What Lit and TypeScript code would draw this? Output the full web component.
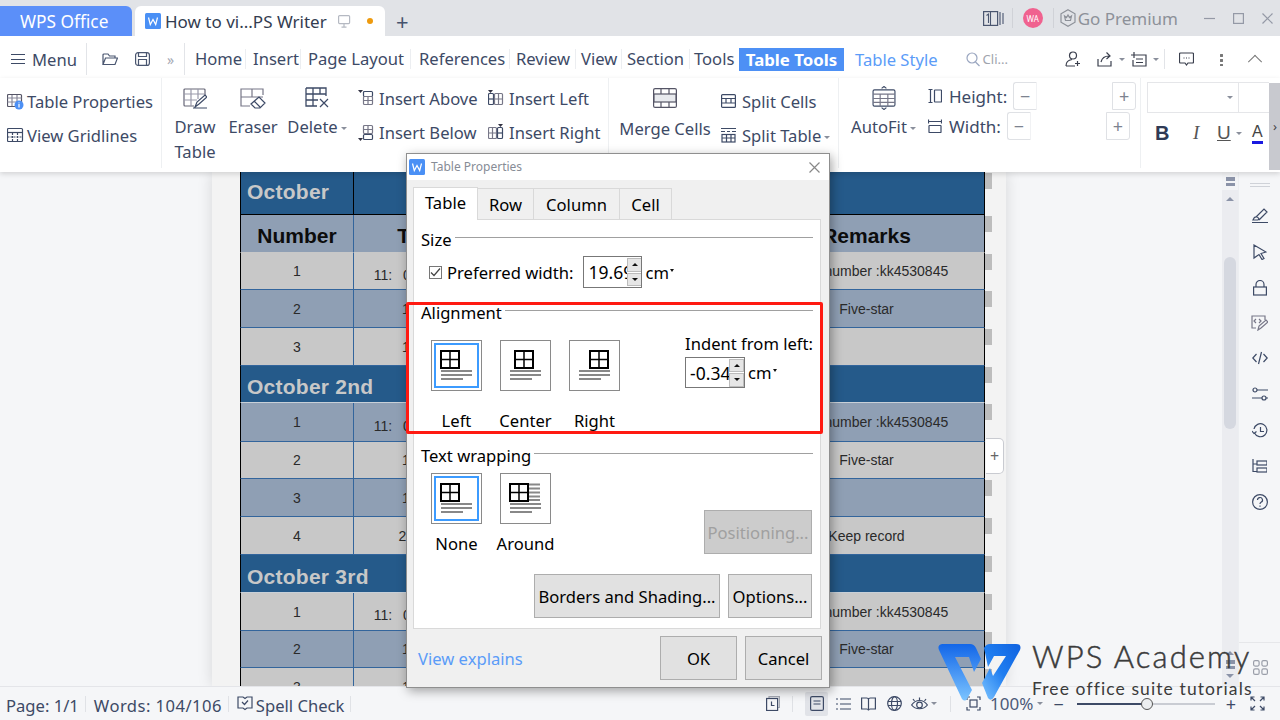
import { LitElement, html, css, svg } from "lit";
import { customElement } from "lit/decorators.js";

const ic = (w: number, h: number, body: unknown) => html`<svg class="ic" width=${w} height=${h} viewBox="0 0 ${w} ${h}" fill="none" stroke="currentColor" stroke-width="1.2">${body}</svg>`;

const icons = {
  tableProps: ic(17, 17, svg`<rect x=".5" y="1.5" width="14" height="12" rx="1" stroke="#556"/><path d="M.5 5h14M.5 9h14M5 2v11M10 2v11" stroke="#889"/><circle cx="12" cy="12" r="4.5" fill="#4d90f5" stroke="none"/><path d="M12 11v3.5M12 9.5v.8" stroke="#fff"/>`),
  gridlines: ic(17, 17, svg`<rect x=".5" y="1.5" width="15" height="13" rx="1"/><path d="M.5 5.5h15" /><path d="M.5 10h15M5.5 6v8M10.5 6v8" stroke-dasharray="2 1"/>`),
  draw: ic(24, 22, svg`<path d="M22 9V3a1 1 0 0 0-1-1H2a1 1 0 0 0-1 1v15a1 1 0 0 0 1 1h9" stroke="#667"/><path d="M1 7h21M1 13h13M8 2v17M15 2v10" stroke="#99a"/><path d="M12 20l2-5 8-7 2 2-8 7zM10 21h14"/>`),
  eraser: ic(26, 22, svg`<path d="M23 8V2H1v17h9M1 10h22M12 2v8" stroke="#778"/><path d="M11 17l8-7 6 6-5 5h-5zM14 14l6 6"/>`),
  del: ic(24, 22, svg`<path d="M1 1h20v8M1 1v18h11M1 7h20M1 13h12M8 1v18M15 1v6" stroke-width="1.3"/><path d="M15 12l8 8M23 12l-8 8"/>`),
  insAbove: ic(16, 16, svg`<path d="M0 0h5L2.5 3z" fill="#334" stroke="none"/><rect x="5.5" y="1.5" width="9" height="5" rx="1"/><rect x="5.5" y="6.5" width="9" height="8" rx="1" stroke="#778"/><path d="M10 7v8M6 10.500h8" stroke="#778"/>`),
  insBelow: ic(16, 17, svg`<rect x="5.500" y="1.500" width="9" height="8" rx="1" stroke="#778"/><path d="M10 2v7M6 5.500h8" stroke="#778"/><rect x="5.500" y="10.500" width="9" height="5" rx="1"/><path d="M0 14h5l-2.500 3z" fill="#334" stroke="none"/>`),
  insLeft: ic(16, 16, svg`<path d="M0 0h5L2.500 3z" fill="#334" stroke="none"/><rect x=".5" y="3.500" width="5" height="11" rx="1"/><path d="M1 9h4" /><rect x="6.500" y="3.500" width="8" height="11" rx="1" stroke="#778"/><path d="M10.500 4v10M7 9h7" stroke="#778"/>`),
  insRight: ic(16, 16, svg`<path d="M10 0h5l-2.500 3z" fill="#334" stroke="none"/><rect x=".5" y="3.500" width="8" height="11" rx="1" stroke="#778"/><path d="M4.500 4v10M1 9h7" stroke="#778"/><rect x="9.500" y="3.500" width="5" height="11" rx="1"/><path d="M10 9h4"/>`),
  merge: ic(24, 20, svg`<rect x=".6" y=".6" width="22.800" height="18.800" rx="1.500" stroke="#556"/><rect x="1" y="6" width="22" height="8" fill="#e8eaee" stroke="#556"/><path d="M8 1v5M16 1v5M8 14v5M16 14v5" stroke="#556"/>`),
  splitCells: ic(15, 14, svg`<rect x=".6" y=".6" width="13.800" height="12.800" rx="1"/><path d="M1 4.500h13M1 9h13M5 4.500V9M10 4.500V9"/>`),
  splitTable: ic(15, 16, svg`<path d="M0 1.500h15M0 4.500h4M6 4.500h3M11 4.500h4"/><rect x="1" y="7.500" width="13" height="7.500"/><path d="M1 11h13M5.500 8v7M10 8v7"/>`),
  autofit: ic(24, 25, svg`<path d="M9.500 2.500L12 .5l2.500 2M9.500 22.500l2.500 2 2.500-2"/><rect x=".6" y="4" width="22.800" height="17" rx="1.500"/><path d="M.6 8.500h22.800M.6 13h22.800M.6 17h22.800M8 8.500V21M16 8.500V21" stroke="#778"/>`),
  hIcon: ic(14, 14, svg`<path d="M.5.500h4M.5 13.500h4M2.500.5v13"/><rect x="6.500" y="1" width="7" height="12" rx=".5"/>`),
  wIcon: ic(14, 14, svg`<path d="M.5.500v4M13.500.500v4M.5 2.500h13"/><rect x="1" y="6.500" width="12" height="7" rx=".5"/>`),
  open: ic(16, 13, svg`<path d="M1 11.500V2a1 1 0 0 1 1-1h4l1.500 2H13v2M1 11.500l2.500-6.500h12l-2.500 6.500z"/>`),
  save: ic(15, 14, svg`<rect x=".6" y=".6" width="13.800" height="12.800" rx="2.500"/><path d="M3.500 1v3.500h8V1M3.500 13V7.500h8V13"/>`),
  search: ic(14, 15, svg`<circle cx="6" cy="6" r="5"/><path d="M9.500 10l4 4"/>`),
  person: ic(16, 16, svg`<circle cx="8" cy="4.500" r="3.500"/><path d="M1 15c0-3.500 2-6 6-6.500M1 15h9M12.500 10v5M10 12.500h5"/>`),
  share: ic(16, 15, svg`<path d="M1 7v7h13V9M4 10c1-4 4-6 8-6M9.500.5L13 4l-3.500 3"/>`),
  note: ic(16, 15, svg`<path d="M5 3h10v11H2V8M5 7h7M5 10.500h7M3 0v6M0 3h6"/>`),
  comment: ic(15, 14, svg`<path d="M1.500 1h12a1 1 0 0 1 1 1v8a1 1 0 0 1-1 1H9l-1.500 2L6 11H1.500a1 1 0 0 1-1-1V2a1 1 0 0 1 1-1z"/><path d="M4.500 6h1M7 6h1M9.500 6h1"/>`),
  pen: ic(16, 15, svg`<path d="M4 9L12 1l3 3-8 8M2 10c2-2 4-1 5 1l-1 1H1zM0 14.500h16"/>`),
  cursor: ic(14, 16, svg`<path d="M1 1l12 7-5 1.500 3 5-2 1-3-5L1 14z"/>`),
  lock: ic(14, 16, svg`<rect x=".6" y="7" width="12.800" height="8" /><path d="M3 7V4.500a4 4 0 0 1 8 0V7"/>`),
  codeEdit: ic(17, 16, svg`<path d="M14 5V1H1v12h4" stroke="#778"/><path d="M5 4L3 6l2 2M8 4l2 2-2 2" stroke="#778"/><path d="M7 15l1-4 7-6 2 2-7 6z" stroke="#778"/>`),
  code: ic(16, 14, svg`<path d="M4.500 3L.8 7l3.700 4M11.500 3l3.700 4-3.700 4M9.500 1l-3 12"/>`),
  sliders: ic(16, 14, svg`<circle cx="3" cy="3" r="2"/><path d="M5 3h11M0 11h10"/><circle cx="12" cy="11" r="2"/><path d="M14 11h2"/>`),
  history: ic(16, 15, svg`<path d="M2.500 10A6.500 6.500 0 1 0 2 6M0 8l2 2.500L4.500 8.500M8.500 4v4.500H12"/>`),
  outline: ic(15, 14, svg`<path d="M1 0v12.500h4M1 5h4"/><rect x="5" y="2" width="10" height="4"/><rect x="5" y="9" width="10" height="4"/>`),
  help: ic(16, 16, svg`<circle cx="8" cy="8" r="7.400"/><path d="M5.500 6a2.500 2.500 0 1 1 3.500 2.300c-.7.4-1 .9-1 1.700M8 11.500v1.200"/>`),
  spell: ic(16, 15, svg`<path d="M1 1h5l2 1.500L10 1h5v11h-5l-2 1.500L6 12H1z"/><path d="M5 6l2.500 2.500L11 4.500"/>`),
  reader: ic(21, 15, svg`<rect x=".6" y=".6" width="14" height="13.800"/><path d="M7.500 1v13M17 1v13M20 2v11M3.500 4.500l2-1.500v9" stroke-width="1.100"/>`),
  crown: ic(16, 18, svg`<path d="M8 .8l7 4v8.400l-7 4-7-4V4.800z"/><path d="M4.500 7l2 1.500L8 6l1.500 2.500 2-1.500-1 4.500h-5z"/>`),
  fit: ic(15, 15, svg`<path d="M1 4V1h3M11 1h3v3M14 11v3h-3M4 14H1v-3"/><rect x="4" y="4" width="7" height="7"/>`),
  expand: ic(15, 15, svg`<path d="M1 4.500V1h3.500M1 1l4 4M10.500 1H14v3.500M14 1l-4 4M14 10.500V14h-3.500M14 14l-4-4M4.500 14H1v-3.500M1 14l4-4"/>`),
  pages: ic(14, 15, svg`<path d="M3 2.500V.6h10.400V11.500H12" stroke="#a5a9b3"/><rect x=".6" y="2.500" width="11" height="12"/><path d="M5.500 5.500V9.500H8.500"/>`),
  doc: ic(14, 15, svg`<rect x=".6" y=".6" width="12.800" height="13.800" rx="1.500"/><path d="M3.500 5h7M3.500 8h7"/>`),
  list: ic(15, 14, svg`<path d="M4 2h11M4 7h11M4 12h11M0 2h2M0 7h2M0 12h2"/>`),
  book: ic(15, 14, svg`<path d="M.6 1h5c1 0 1.900.5 1.900 1.500C7.500 1.500 8.400 1 9.400 1h5v11h-5c-1 0-1.900.5-1.900 1.500 0-1-.9-1.500-1.900-1.500h-5zM7.500 2.500v11"/>`),
  globe: ic(15, 15, svg`<circle cx="7.500" cy="7.500" r="6.800"/><ellipse cx="7.500" cy="7.500" rx="3" ry="6.800"/><path d="M1 5.500h13M1 9.500h13"/>`),
  eye: ic(17, 14, svg`<path d="M.6 8c4-6 11.800-6 15.800 0-4 5-11.800 5-15.800 0z"/><circle cx="8.500" cy="8" r="2.800"/><path d="M2 2l1.500 2M8.500 .5v2.500M15 2l-1.500 2"/>`),
  apps: ic(15, 15, svg`<rect x=".6" y=".6" width="5.500" height="5.500" rx="1.500"/><rect x="8.900" y=".6" width="5.500" height="5.500" rx="1.500"/><rect x=".6" y="8.900" width="5.500" height="5.500" rx="1.500"/><rect x="8.900" y="8.900" width="5.500" height="5.500" rx="1.500"/>`),
};

const wBadge = html`<svg class="wbadge" width="16" height="16" viewBox="0 0 16 16"><rect width="16" height="16" rx="1.500" fill="#4a90f5"/><path d="M3.500 4.500l1.800 7L8 6.500l2.700 5 1.800-7" fill="none" stroke="#fff" stroke-width="1.200"/></svg>`;

type Row = { h: number; k: "dark" | "head" | "light" | "blue"; a: string; b?: string; c?: string; low?: boolean; div?: boolean };
const slot = "11:\u2002 00-12:\u2002 00";
const rows: Row[] = [
  { h: 43, k: "dark", a: "October", div: true },
  { h: 38, k: "head", a: "Number", b: "Time", c: "Remarks" },
  { h: 37, k: "light", a: "1", b: slot, c: "Order number :kk4530845", low: true },
  { h: 38, k: "blue", a: "2", b: "14: 00", c: "Five-star" },
  { h: 38, k: "light", a: "3", b: "16: 00" },
  { h: 37, k: "dark", a: "October 2nd" },
  { h: 39, k: "blue", a: "1", b: slot, c: "Order number :kk4530845", low: true },
  { h: 37, k: "light", a: "2", b: "14: 00", c: "Five-star" },
  { h: 38, k: "blue", a: "3", b: "16: 00" },
  { h: 38, k: "light", a: "4", b: "20:\u2002 00", c: "Keep record" },
  { h: 38, k: "dark", a: "October 3rd" },
  { h: 38, k: "light", a: "1", b: slot, c: "Order number :kk4530845", low: true },
  { h: 37, k: "blue", a: "2", b: "14: 00", c: "Five-star" },
  { h: 38, k: "light", a: "3", b: "16: 00" },
];

const tabs = [
  { t: "Home", w: 51, p: 0 },
  { t: "Insert", w: 55, p: 7 },
  { t: "Page Layout", w: 110, p: 7 },
  { t: "References", w: 99, p: 8 },
  { t: "Review", w: 66, p: 6 },
  { t: "View", w: 46, p: 5 },
  { t: "Section", w: 68, p: 5 },
  { t: "Tools", w: 49, p: 4 },
];

const caret = html`<i class="caret"></i>`;

function placeIcon(tx: number, around = false) {
  return html`<svg width="49" height="49" viewBox="0 0 49 49">
    <rect x=${tx - 1} y="10" width="18" height="17" fill="#fff" stroke="#000" stroke-width="2"/>
    <path d="M${tx + 8} 10v17M${tx - 1} 18.500h18" stroke="#000" stroke-width="1.500"/>
    ${around ? svg`<path d="M28 10.500h11M28 14.500h11M28 18.500h11M28 22.500h11M28 26h11" stroke="#888" stroke-width="2"/>` : null}
    <path d="M9 30h31M9 34h31M9 38h22" stroke="#888" stroke-width="2" />
  </svg>`;
}

function spin(val: string) {
  return html`<div class="spin"><span class="val">${val}</span><div class="arrows"><b><i class="up"></i></b><b><i class="down"></i></b></div></div>`;
}

@customElement("app-root")
export class AppRoot extends LitElement {
  static styles = css`
    :host { display: block; width: 1280px; height: 720px; overflow: hidden; position: relative; font-family: "Noto Sans", sans-serif; font-size: 16.600px; color: #3d4a66; background: #f5f6f8; }
    * { box-sizing: border-box; }
    .app { display: flex; flex-direction: column; height: 720px; }
    .ic { display: block; flex: none; }
    .caret { display: inline-block; width: 0; height: 0; border: 3px solid transparent; border-top: 3px solid #8a8f9c; border-bottom: 0; margin-left: 3px; vertical-align: middle; flex: none; }

    .title { height: 36px; flex: none; background: #e1e3e7; display: flex; align-items: flex-end; font-size: 17px; }
    .wps { width: 132px; height: 30px; background: #5b8ff9; color: #fff; border-radius: 0 6px 0 0; display: flex; align-items: center; padding-left: 20px; font-size: 17.300px; }
    .doc { width: 250px; height: 30px; margin-left: 3px; background: #fff; border-radius: 6px 6px 0 0; display: flex; align-items: center; padding-left: 10px; color: #333c50; }
    .wbadge { flex: none; display: block; }
    .doc .name { margin-left: 4px; width: 173px; white-space: nowrap; }
    .doc .mon { color: #b5b9c2; }
    .dot { width: 6px; height: 6px; border-radius: 50%; background: #ee9a0e; margin-left: 16px; }
    .newtab { margin-left: 11px; height: 30px; display: flex; align-items: center; font-size: 22px; color: #46536e; width: 16px; }
    .tright { margin-left: auto; height: 36px; display: flex; align-items: center; color: #4a5670; }
    .vsep { width: 1px; height: 20px; background: #d0d2d7; }
    .vsep.first { margin-left: 8px; }
    .avatar { width: 20px; height: 20px; border-radius: 50%; background: #f0628f; color: #fff; font-size: 8px; display: flex; align-items: center; justify-content: center; margin: 0 10px; }
    .gopre { color: #8d9199; margin-left: 2px; font-size: 17px; white-space: nowrap; }
    .crown { color: #8d9199; margin-left: 6px; }
    .win { display: flex; align-items: center; margin-left: 26px; margin-right: 7px; gap: 18px; color: #9499a6; }

    .tabs { height: 42px; flex: none; background: #fff; display: flex; align-items: center; padding-top: 4px; }
    .menu { display: flex; align-items: center; padding-left: 11px; width: 86px; gap: 7px; }
    .burger { width: 14px; height: 10px; border-top: 1px solid #3d4a66; border-bottom: 1px solid #3d4a66; }
    .burger::after { content: ""; display: block; height: 1px; margin-top: 3.500px; background: #3d4a66; }
    .sepv { width: 1px; height: 32px; background: #e2e4e8; flex: none; }
    .qa { width: 97px; display: flex; align-items: center; padding-left: 15px; color: #4a5670; }
    .qa .save { margin-left: 17px; }
    .qa .more { margin-left: 17px; color: #a5a9b3; font-size: 14px; }
    .ribtabs { display: flex; align-items: center; margin-left: 10px; }
    .rt { white-space: nowrap; border-right: 1px solid #eceef1; line-height: 20px; flex: none; }
    .rt:last-child { border: 0; }
    .tt { background: #4d90f5; color: #fff; font-weight: 700; height: 23px; width: 105px; display: flex; align-items: center; justify-content: center; white-space: nowrap; font-size: 16.800px; }
    .ts { color: #5b9cf8; margin-left: 11px; white-space: nowrap; }
    .srch { display: flex; align-items: center; margin-left: 28px; color: #9aa6c0; gap: 3px; }
    .srch span { font-size: 13px; color: #a0a4ad; }
    .tools { margin-left: auto; display: flex; align-items: center; color: #3a3f4d; padding-right: 20px; }
    .tools .ic { margin-right: 3px; }
    .tools .sepv { height: 20px; margin: 0 14px 0 5px; }
    .tools .gp13 { width: 13px; } .tools .gp6 { width: 6px; }
    .kebab { width: 3px; height: 13px; margin: 0 24px 0 23px; background: radial-gradient(circle, #777 1.400px, transparent 1.600px) 0 0 / 3px 5px; }
    .chev { width: 10px; height: 10px; border-left: 1px solid #777; border-top: 1px solid #777; transform: rotate(45deg) translate(2px, 2px); margin-left: 3px; }

    .rib { height: 94px; flex: none; background: #fff; display: flex; box-shadow: 0 2px 5px rgba(0,0,0,.14); position: relative; z-index: 1; white-space: nowrap; }
    .grp { display: flex; border-right: 1px solid #eef0f2; height: 90px; flex: none; }
    .g1 { width: 162px; flex-direction: column; padding: 6px 0 0 7px; }
    .g1 .item { gap: 3px; }
    .g2 { width: 447px; }
    .g3 { width: 230px; }
    .g4 { width: 302px; }
    .item { display: flex; align-items: center; height: 34px; gap: 5px; }
    .item.g6 { gap: 6px; }
    .col { display: flex; flex-direction: column; padding-top: 6px; }
    .g2 .col { padding-top: 3px; }
    .big { display: flex; flex-direction: column; align-items: center; padding-top: 8px; line-height: 25px; text-align: center; flex: none; }
    .big .ic { height: 24px; margin-bottom: 4px; }
    .b-draw { width: 66px; }
    .b-erase { width: 50px; }
    .b-del { width: 74px; padding-left: 4px; }
    .b-merge { width: 112px; }
    .b-merge span { margin-top: 2px; }
    .b-auto { width: 89px; }
    .c-above { width: 130px; margin-left: 6px; }
    .g4 .col { padding-top: 3px; }
    .dim { display: flex; align-items: center; height: 30px; font-size: 17px; }
    .dim .lbl { margin-left: 7px; }
    .mbox { width: 24px; height: 28px; margin-left: 6px; border: 1px solid #dfe1e5; border-right-color: #f1f2f4; border-radius: 3px 0 0 3px; display: flex; align-items: center; justify-content: center; color: #7d8390; font-size: 18px; }
    .pbox { width: 24px; height: 28px; margin-left: 75px; border: 1px solid #dfe1e5; border-radius: 0 3px 3px 0; display: flex; align-items: center; justify-content: center; color: #7d8390; font-size: 18px; }
    .g5 { width: 128px; flex: none; overflow: hidden; padding: 4px 0 0 6px; }
    .combo { display: flex; width: 130px; height: 31px; border: 1px solid #e5e6e9; }
    .combo .f1 { width: 91px; border-right: 1px solid #e5e6e9; display: flex; align-items: center; justify-content: flex-end; padding-right: 5px; }
    .fmt { display: flex; align-items: center; margin-top: 7px; padding-left: 8px; height: 26px; font-family: "Liberation Sans", sans-serif; font-size: 19px; color: #2f3a55; }
    .fmt .bb { font-weight: 700; font-size: 20px; width: 38px; }
    .fmt .ii { font-style: italic; font-family: "Liberation Serif", serif; width: 24px; color: #555; }
    .fmt .uu { text-decoration: underline; width: 16px; color: #555; }
    .fmt .aa { margin-left: 10px; border-bottom: 3px solid #1a1ae0; line-height: 18px; font-size: 16px; color: #444; }
    .rscroll { width: 12px; height: 87px; margin-top: 5px; background: #c8c9cf; color: #444; font-size: 13px; display: flex; justify-content: center; padding-top: 36px; flex: none; line-height: 14px; }

    .work { flex: 1; min-height: 0; display: flex; position: relative; overflow: hidden; }
    .canvas { width: 1222px; flex: none; padding-left: 212px; overflow: hidden; }
    .page { width: 794px; height: 100%; background: #f3f3f3; padding-left: 28px; box-shadow: 0 0 14px rgba(0,0,0,.13); }
    .row { display: grid; grid-template-columns: 114px 136px 259px 236px 7px; font-family: "Liberation Sans", sans-serif; font-size: 14px; color: #2a2a2a; text-align: center; }
    .cell { border-right: 1px solid #33659c; border-bottom: 1px solid #33659c; display: flex; align-items: center; justify-content: center; min-width: 0; white-space: nowrap; overflow: hidden; }
    .cell:first-child { border-left: 1px solid #000; }
    .cell.last { border-right-color: #000; }
    .light .cell { background: #c8c8c8; }
    .blue .cell { background: #8f9fb4; }
    .head .cell { background: #8f9fb4; font-size: 21px; font-weight: 700; color: #0c0c0c; border-bottom-color: #c8c8c8; padding-top: 4px; }
    .dark .cell { background: #255a8a; color: #c8c8c8; font-weight: 700; font-size: 21px; letter-spacing: .25px; justify-content: flex-start; padding: 6px 0 0 6px; border-bottom-color: #c8d0d8; border-right-color: #000; }
    .dark.first .cell { border-bottom-color: #000; padding: 0 0 2px 6px; }
    .span1 { grid-column: 1 / 5; }
    .span2 { grid-column: 2 / 5; }
    .cell.lowtxt { padding-top: 7px; }
    .mark { width: 7px; height: 16px; margin-top: 1px; background: #bdbdbd; }
    .addrow { position: absolute; left: 986px; top: 266px; width: 18px; height: 36px; background: #fff; border: 1px solid #c9cbd1; border-left: 0; border-radius: 0 5px 5px 0; display: flex; align-items: center; justify-content: center; color: #666; font-size: 16px; }
    .vscroll { width: 16px; flex: none; background: #ebecf0; display: flex; flex-direction: column; align-items: center; }
    .vtop { height: 18px; width: 100%; background: #f3f4f6; display: flex; justify-content: center; padding-top: 5px; }
    .mini { width: 9px; height: 9px; background: linear-gradient(#8b93a8 0 4px, transparent 4px 6px, #8b93a8 6px); }
    .tri { width: 0; height: 0; border: 4px solid transparent; border-bottom: 4px solid #8b93a8; border-top: 0; margin-top: 7px; }
    .thumb { width: 12px; height: 172px; margin-top: 56px; background: #d5d8e0; border-radius: 6px; }
    .tri.dn { border-bottom: 0; border-top: 4px solid #8b93a8; }
    .vbot { margin-top: auto; padding-bottom: 8px; display: flex; flex-direction: column; align-items: center; gap: 5px; }
    .vbot .tri { margin: 0; }
    .side { flex: 1; border-left: 1px solid #eceef1; display: flex; flex-direction: column; align-items: center; color: #3d4a66; padding-top: 11px; }
    .side .hnd { width: 20px; height: 4px; border-top: 1px solid #cfd2d8; border-bottom: 1px solid #cfd2d8; margin-bottom: 21px; }
    .side .si { height: 35.800px; display: flex; align-items: flex-start; justify-content: center; width: 20px; }
    .side .apps { margin-top: auto; width: 100%; border-top: 1px solid #e6e7ea; padding: 17px 0 12px 14px; color: #9a9ea9; height: 44px; }

    .status { height: 34px; flex: none; background: #f5f6f8; border-top: 1px solid #e4e5e9; display: flex; align-items: center; padding: 3px 0 0 6px; position: relative; z-index: 1; white-space: nowrap; }
    .status .s { height: 16px; width: 1px; background: #e0e2e6; margin: -3px 8px 0 6px; }
    .words { letter-spacing: .45px; }
    .spell { display: flex; align-items: center; gap: 3px; }
    .spell .ic { margin-top: -3px; }
    .sright { margin: -3px 0 0 auto; display: flex; align-items: center; color: #3d4a66; padding-right: 15px; }
    .sv { width: 1px; height: 16px; background: #dfe1e5; flex: none; }
    .sv.a { margin: 0 12px; }
    .sv.b { margin: 0 15px 0 13px; }
    .active { background: #e1e3e8; border-radius: 2px; height: 24px; width: 23px; display: flex; align-items: center; justify-content: center; margin-right: 8px; color: #3d4a66; }
    .ml10 { margin-left: 10px; } .ml11 { margin-left: 11px; } .ml9 { margin-left: 9px; }
    .zoomt { margin: 0 1px 0 9px; color: #4c5a78; font-size: 17px; }
    .sym { font-size: 18px; margin-left: 10px; }
    .sym.p { margin-left: 0; }
    .slider { width: 138px; height: 2px; background: linear-gradient(90deg, #3d4a66 50%, #c9ccd3 50%); margin: 0 11px 0 13px; position: relative; flex: none; }
    .knob { position: absolute; left: 64px; top: -5px; width: 12px; height: 12px; border-radius: 50%; background: #eceef0; border: 1px solid #555; }
    .expand { margin-left: 14px; }

    .dlg { position: absolute; left: 406px; top: 153px; width: 424px; height: 535px; background: #f0f0f0; border: 1px solid #8f8f8f; box-shadow: 2px 3px 10px rgba(0,0,0,.35); z-index: 5; color: #000; display: flex; flex-direction: column; white-space: nowrap; }
    .dtitle { height: 26px; flex: none; background: #fff; display: flex; align-items: center; padding-left: 2px; }
    .dtitle span { margin: -2px 0 0 6px; font-size: 12px; color: #878c96; }
    .close { margin-left: auto; margin-right: 9px; color: #888; }
    .dtabs { display: flex; margin: 7px 0 0 6px; height: 32px; align-items: flex-end; flex: none; }
    .dt { height: 31px; border: 1px solid #d9d9d9; border-left: 0; border-bottom: 0; display: flex; align-items: center; justify-content: center; background: #f0f0f0; }
    .dt.sel { height: 33px; background: #fff; border-left: 1px solid #d9d9d9; width: 65px; position: relative; z-index: 1; margin-bottom: -1px; padding-bottom: 3px; }
    .w-row { width: 56px; } .w-col { width: 86px; } .w-cell { width: 52px; }
    .pane { width: 408px; height: 410px; margin-left: 6px; flex: none; background: #fff; border: 1px solid #d9d9d9; display: flex; flex-direction: column; }
    .sec { padding: 0 7px; display: flex; flex-direction: column; flex: none; }
    .s-size { height: 83px; padding-top: 7px; }
    .s-align { height: 132px; }
    .s-align .legend { margin-top: -3px; }
    .s-wrap { height: 193px; }
    .legend { display: flex; align-items: center; height: 24px; flex: none; }
    .legend::after { content: ""; flex: 1; height: 1px; background: #a0a0a0; margin: -3px 0 0 3px; }
    .pref { display: flex; align-items: center; margin: 5px 0 0 8px; }
    .cb { width: 13px; height: 13px; border: 1px solid #777; display: flex; align-items: center; justify-content: center; margin-right: 5px; }
    .spin { display: flex; border: 1px solid #777; height: 32px; width: 59px; align-items: center; background: #fff; overflow: hidden; flex: none; }
    .pref .spin { margin-left: 10px; }
    .val { padding-left: 4px; width: 43px; overflow: hidden; font-size: 17.500px; flex: none; }
    .arrows { width: 15px; height: 28px; display: flex; flex-direction: column; gap: 1px; flex: none; }
    .arrows b { flex: 1; display: flex; align-items: center; justify-content: center; background: #e6e6e6; border: 1px solid #bcbcbc; }
    .up { border: 3px solid transparent; border-bottom: 3px solid #111; border-top: 0; }
    .down { border: 3px solid transparent; border-top: 3px solid #111; border-bottom: 0; }
    .unit { margin-left: 3px; display: flex; align-items: center; }
    .unit .caret { border-top-color: #111; margin: -4px 0 0 1px; border-width: 3px 2.500px 0; }
    .optrow { display: flex; margin: 16px 0 0 10px; }
    .opt { width: 69px; display: flex; flex-direction: column; align-items: flex-start; flex: none; }
    .pbx { width: 51px; height: 51px; border: 1px solid #8a8a8a; background: #fff; display: block; flex: none; }
    .pbx.on { box-shadow: inset 0 0 0 2px #fff, inset 0 0 0 4px #3c9bff; }
    .pbx svg { display: block; }
    .opt label { width: 51px; display: flex; justify-content: center; white-space: nowrap; }
    .s-align .opt label { margin-top: 18px; }
    .s-wrap .opt label { margin-top: 8px; }
    .indent { margin-left: auto; display: flex; flex-direction: column; margin-top: -7px; }
    .indent .t { height: 23px; line-height: 22px; }
    .indent .in { display: flex; align-items: center; margin-top: 1px; }
    .indent .spin { width: 60px; height: 31px; }
    .s-wrap .legend { margin-top: 8px; }
    .wraptop { display: flex; height: 81px; margin: 6px 0 0 10px; }
    .wraptop .opt { height: 100%; }
    .btn { height: 44px; background: #e1e1e1; border: 1px solid #adadad; display: flex; align-items: center; justify-content: center; flex: none; }
    .btn.dis { background: #cccccc; color: #a0a0a0; width: 108px; margin: auto 1px 0 auto; }
    .wrapbtns { display: flex; justify-content: flex-end; gap: 8px; margin: 20px 1px 0 0; }
    .w-bs { width: 186px; } .w-opt { width: 84px; }
    .dfoot { display: flex; align-items: center; flex: 1; padding: 0 7px 0 11px; gap: 8px; }
    .link { color: #5b9cf8; margin-right: auto; }
    .w-ok { width: 77px; }
    .red { position: absolute; left: 406px; top: 302px; width: 417px; height: 132px; border: 3px solid #ff1a12; border-radius: 2px; z-index: 6; pointer-events: none; }

    .wm { position: absolute; left: 938px; top: 643px; z-index: 8; display: flex; color: #3b3b3b; pointer-events: none; }
    .wm svg { display: block; flex: none; }
    .wmt { margin: -2px 0 0 11px; display: flex; flex-direction: column; font-family: Lato, sans-serif; }
    .wmt .a { font-size: 31px; line-height: 30px; letter-spacing: 2.100px; white-space: nowrap; font-weight: 300; -webkit-text-stroke: .5px #3b3b3b; }
    .wmt .b { font-size: 17.500px; line-height: 21px; letter-spacing: 1.100px; white-space: nowrap; margin-top: 7px; }
  `;

  render() {
    return html`
      <div class="app">
        <div class="title">
          <div class="wps">WPS Office</div>
          <div class="doc">${wBadge}<span class="name">How to vi...PS Writer</span>
            <span class="mon">${ic(13, 13, svg`<rect x=".6" y=".6" width="11" height="8" rx="1"/><path d="M6 9v3M3.500 12.200h5"/>`)}</span>
            <i class="dot"></i></div>
          <div class="newtab">+</div>
          <div class="tright">
            ${icons.reader}
            <span class="vsep first"></span>
            <span class="avatar">WA</span>
            <span class="vsep"></span>
            <span class="crown">${icons.crown}</span>
            <span class="gopre">Go Premium</span>
            <span class="win">
              ${ic(11, 11, svg`<path d="M0 5.500h11"/>`)}
              ${ic(11, 11, svg`<rect x=".6" y=".6" width="9.800" height="9.800"/>`)}
              ${ic(11, 11, svg`<path d="M.5.500l10 10M10.500.5l-10 10"/>`)}
            </span>
          </div>
        </div>

        <div class="tabs">
          <div class="menu"><i class="burger"></i><span>Menu</span></div>
          <i class="sepv"></i>
          <div class="qa">${icons.open}<span class="save">${icons.save}</span><span class="more">»</span></div>
          <i class="sepv"></i>
          <div class="ribtabs">${tabs.map((t) => html`<span class="rt" style="width:${t.w}px;padding-left:${t.p}px">${t.t}</span>`)}</div>
          <div class="tt">Table Tools</div>
          <div class="ts">Table Style</div>
          <div class="srch">${icons.search}<span>Cli...</span></div>
          <div class="tools">
            ${icons.person}<span class="gp13"></span>
            ${icons.share}${caret}<span class="gp6"></span>
            ${icons.note}${caret}<i class="sepv"></i>
            ${icons.comment}<i class="kebab"></i><i class="chev"></i>
          </div>
        </div>

        <div class="rib">
          <div class="grp g1">
            <div class="item">${icons.tableProps}<span>Table Properties</span></div>
            <div class="item">${icons.gridlines}<span>View Gridlines</span></div>
          </div>
          <div class="grp g2">
            <div class="big b-draw">${icons.draw}<span>Draw<br />Table</span></div>
            <div class="big b-erase">${icons.eraser}<span>Eraser</span></div>
            <div class="big b-del">${icons.del}<span>Delete${caret}</span></div>
            <div class="col c-above">
              <div class="item">${icons.insAbove}<span>Insert Above</span></div>
              <div class="item">${icons.insBelow}<span>Insert Below</span></div>
            </div>
            <div class="col">
              <div class="item">${icons.insLeft}<span>Insert Left</span></div>
              <div class="item">${icons.insRight}<span>Insert Right</span></div>
            </div>
          </div>
          <div class="grp g3">
            <div class="big b-merge">${icons.merge}<span>Merge Cells</span></div>
            <div class="col">
              <div class="item g6">${icons.splitCells}<span>Split Cells</span></div>
              <div class="item g6">${icons.splitTable}<span>Split Table${caret}</span></div>
            </div>
          </div>
          <div class="grp g4">
            <div class="big b-auto">${icons.autofit}<span>AutoFit${caret}</span></div>
            <div class="col">
              <div class="dim">${icons.hIcon}<span class="lbl">Height:</span><span class="mbox">−</span><span class="pbox">+</span></div>
              <div class="dim">${icons.wIcon}<span class="lbl">Width:</span><span class="mbox">−</span><span class="pbox">+</span></div>
            </div>
          </div>
          <div class="g5">
            <div class="combo"><div class="f1">${caret}</div></div>
            <div class="fmt"><span class="bb">B</span><span class="ii">I</span><span class="uu">U</span>${caret}<span class="aa">A</span></div>
          </div>
          <div class="rscroll">›</div>
        </div>

        <div class="work">
          <div class="canvas"><div class="page">
            ${rows.map((r, i) => html`
              <div class="row ${r.k} ${i === 0 ? "first" : ""}" style="height:${r.h}px">
                ${r.k === "dark"
                  ? r.div
                    ? html`<div class="cell">${r.a}</div><div class="cell span2 last"></div>`
                    : html`<div class="cell span1 last">${r.a}</div>`
                  : html`<div class="cell">${r.a}</div>
                      <div class="cell ${r.low ? "lowtxt" : ""}">${r.b}</div>
                      <div class="cell"></div>
                      <div class="cell last">${r.c ?? ""}</div>`}
                ${i === 7 ? html`<span></span>` : html`<i class="mark"></i>`}
              </div>`)}
          </div></div>
          <div class="addrow">+</div>
          <div class="vscroll">
            <div class="vtop"><i class="mini"></i></div>
            <i class="tri"></i>
            <i class="thumb"></i>
            <div class="vbot"><i class="tri"></i><i class="mini"></i><i class="tri dn"></i></div>
          </div>
          <div class="side">
            <i class="hnd"></i>
            ${[icons.pen, icons.cursor, icons.lock, icons.codeEdit, icons.code, icons.sliders, icons.history, icons.outline, icons.help].map((x) => html`<div class="si">${x}</div>`)}
            <div class="apps">${icons.apps}</div>
          </div>
        </div>

        <div class="status">
          <span>Page: 1/1</span><i class="s"></i>
          <span class="words">Words: 104/106</span><i class="s"></i>
          <span class="spell">${icons.spell}Spell Check</span><i class="s"></i>
          <div class="sright">
            ${icons.pages}
            <i class="sv a"></i>
            <span class="active">${icons.doc}</span>
            ${icons.list}
            <span class="ml10">${icons.book}</span>
            <span class="ml11">${icons.globe}</span>
            <span class="ml9">${icons.eye}</span>${caret}
            <i class="sv b"></i>
            ${icons.fit}
            <span class="zoomt">100%</span>${caret}
            <span class="sym">−</span>
            <div class="slider"><i class="knob"></i></div>
            <span class="sym p">+</span>
            <span class="expand">${icons.expand}</span>
          </div>
        </div>
      </div>

      <div class="dlg">
        <div class="dtitle">${wBadge}<span>Table Properties</span>
          <i class="close">${ic(11, 11, svg`<path d="M.5.500l10 10M10.500.5l-10 10"/>`)}</i></div>
        <div class="dtabs">
          <div class="dt sel">Table</div>
          <div class="dt w-row">Row</div>
          <div class="dt w-col">Column</div>
          <div class="dt w-cell">Cell</div>
        </div>
        <div class="pane">
          <div class="sec s-size">
            <div class="legend">Size</div>
            <div class="pref"><span class="cb">${ic(11, 11, svg`<path d="M1 5.500l3 3 6-7" stroke="#444"/>`)}</span>Preferred width:
              ${spin("19.69")}<span class="unit">cm<i class="caret"></i></span></div>
          </div>
          <div class="sec s-align">
            <div class="legend">Alignment</div>
            <div class="optrow">
              <div class="opt"><span class="pbx on">${placeIcon(10)}</span><label>Left</label></div>
              <div class="opt"><span class="pbx">${placeIcon(15)}</span><label>Center</label></div>
              <div class="opt"><span class="pbx">${placeIcon(21)}</span><label>Right</label></div>
              <div class="indent">
                <div class="t">Indent from left:</div>
                <div class="in">${spin("-0.34")}<span class="unit">cm<i class="caret"></i></span></div>
              </div>
            </div>
          </div>
          <div class="sec s-wrap">
            <div class="legend">Text wrapping</div>
            <div class="wraptop">
              <div class="opt"><span class="pbx on">${placeIcon(10)}</span><label>None</label></div>
              <div class="opt"><span class="pbx">${placeIcon(10, true)}</span><label>Around</label></div>
              <div class="btn dis">Positioning...</div>
            </div>
            <div class="wrapbtns">
              <div class="btn w-bs">Borders and Shading...</div>
              <div class="btn w-opt">Options...</div>
            </div>
          </div>
        </div>
        <div class="dfoot">
          <span class="link">View explains</span>
          <div class="btn w-ok">OK</div>
          <div class="btn w-ok">Cancel</div>
        </div>
      </div>
      <div class="red"></div>

      <div class="wm">
        <svg width="83" height="58" viewBox="0 0 83 58">
          <defs>
            <linearGradient id="wg" x1="0" y1="0" x2="0" y2="1"><stop offset="0" stop-color="#1266e8"/><stop offset="1" stop-color="#7cc4ff"/></linearGradient>
            <linearGradient id="wh" x1="0" y1="1" x2="1" y2="0"><stop offset="0" stop-color="#7cc4ff"/><stop offset=".5" stop-color="#1f7df0"/><stop offset="1" stop-color="#0f62e0"/></linearGradient>
          </defs>
          <path d="M1 7Q-1 2 4 1H32Q36 1 38 5L43 16 36 29 31 14 17 14 34 47 29 56Q27 59 24 56Z" fill="url(#wg)"/>
          <path d="M46 5Q48 1 52 1H78Q84 1 82 7L56 54Q53 59 50 55L44 40 52 25 55 33 68 13 56 13 50 24Z" fill="url(#wh)"/>
        </svg>
        <div class="wmt"><div class="a">WPS Academy</div><div class="b">Free office suite tutorials</div></div>
      </div>
    `;
  }
}
